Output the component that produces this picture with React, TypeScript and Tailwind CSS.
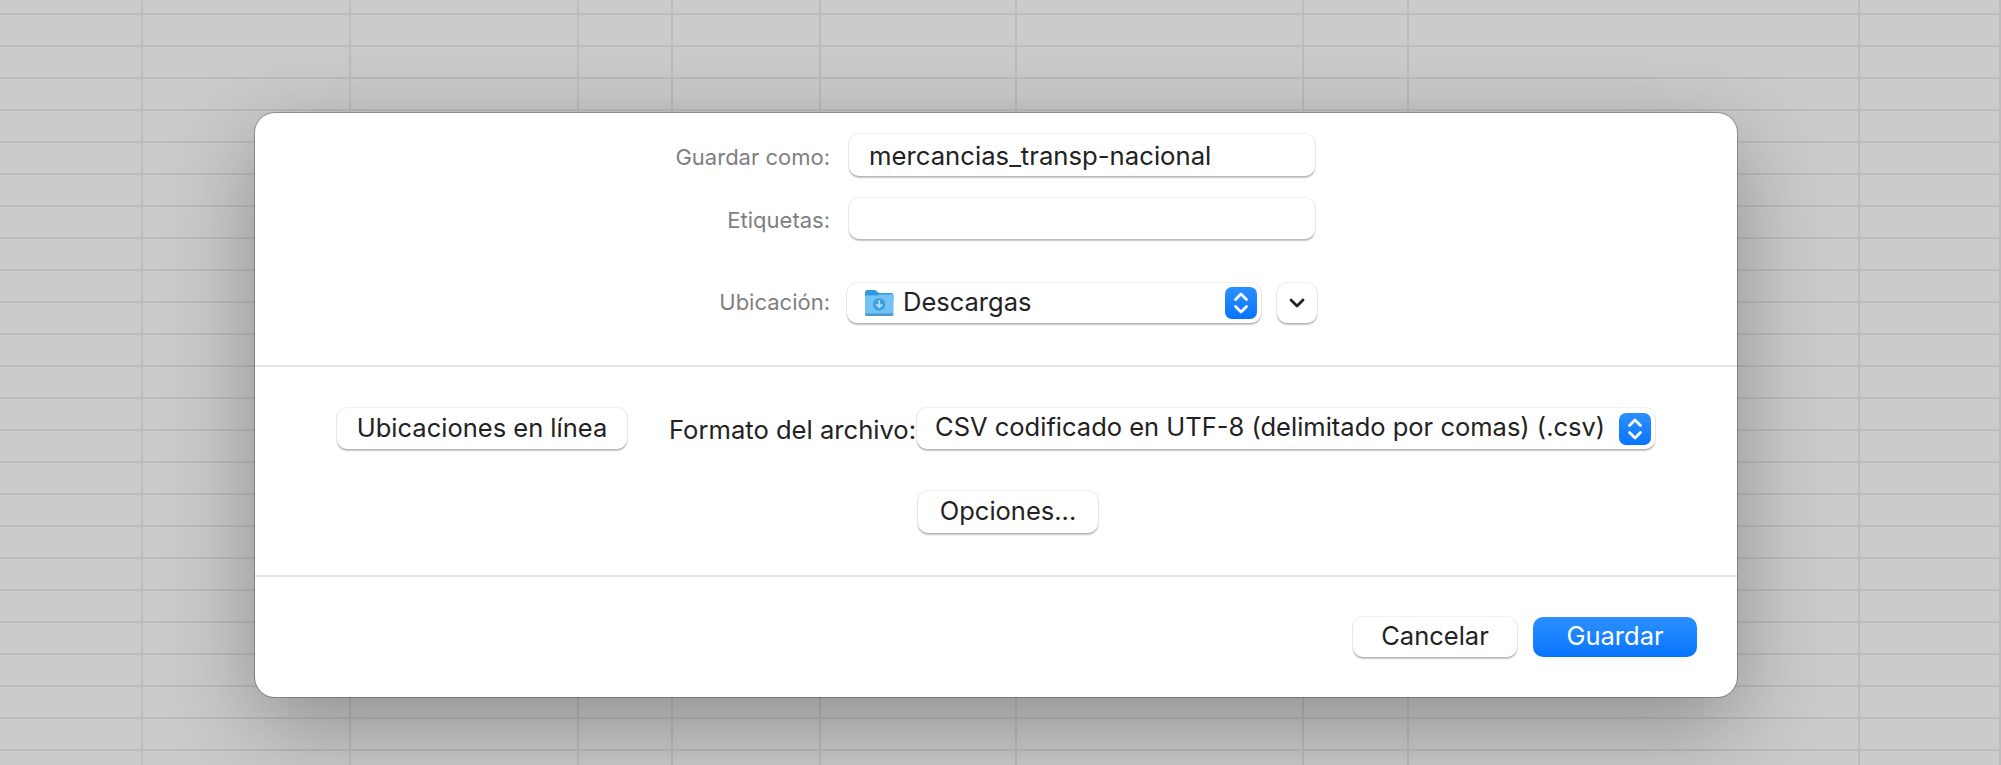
const COLS = 10;
const ROWS = 25;

function Stepper() {
  return (
    <span className="flex h-8 w-8 shrink-0 items-center justify-center rounded-[7px] bg-gradient-to-b from-[#2a90ff] to-[#0674ff]">
      <svg width="18" height="26" viewBox="0 0 18 26" fill="none" stroke="white" strokeWidth="2.8" strokeLinecap="round" strokeLinejoin="round">
        <path d="M3.5 9.5 L9 4 L14.5 9.5" />
        <path d="M3.5 16.5 L9 22 L14.5 16.5" />
      </svg>
    </span>
  );
}

function Folder() {
  return (
    <svg width="30" height="28" viewBox="0 0 30 28" className="shrink-0">
      <path d="M1 3.5 C1 1.8 2 1 3.5 1 H10 C11.5 1 12 1.6 13 2.6 C13.8 3.4 14.4 4 16 4 H27 C28.5 4 29.5 5 29.5 6.5 V12 H1 Z" fill="#2f9ade" />
      <path d="M1 6.5 H12 C14 6.5 14.5 5.6 16 5.6 H27.5 C28.8 5.6 29.5 6.4 29.5 7.6 V25 C29.5 26.3 28.8 27 27.5 27 H3 C1.7 27 1 26.3 1 25 Z" fill="#72c2f6" />
      <path d="M1 24.5 H29.5 V25 C29.5 26.3 28.8 27 27.5 27 H3 C1.7 27 1 26.3 1 25 Z" fill="#4f97c6" />
      <circle cx="15.2" cy="15.5" r="6.2" fill="#3c9fdf" />
      <path d="M15.2 11.8 V18 M12.6 15.6 L15.2 18.3 L17.8 15.6" fill="none" stroke="#a9dcfa" strokeWidth="1.7" strokeLinecap="round" strokeLinejoin="round" />
    </svg>
  );
}

const control =
  "rounded-[10px] bg-white shadow-[0_0_0_1px_rgba(0,0,0,0.05),0_1.5px_1.5px_rgba(0,0,0,0.24)]";
const label = "w-[575px] shrink-0 text-right text-[22px] leading-none text-[#808080]";

export default function App() {
  return (
    <div className="relative h-[765px] w-[2001px] overflow-hidden bg-[#cbcbcb] font-['Inter','Liberation_Sans',sans-serif] text-[#222222]">
      <div className="grid grid-cols-[143px_208px_228px_94px_148px_196px_287px_105px_451px_1fr] grid-rows-[15px_repeat(24,32px)]">
        {Array.from({ length: COLS * ROWS }, (_, i) => (
          <div key={i} className="border-r-2 border-b-2 border-[#bcbcbc]" />
        ))}
      </div>

      <div className="absolute left-[255px] top-[113px] flex h-[584px] w-[1482px] flex-col rounded-[20px] bg-white shadow-[0_0_0_1px_rgba(0,0,0,0.25),0_28px_90px_rgba(0,0,0,0.3)]">
        <div className="flex h-[254px] flex-col border-b-2 border-[#e5e5e5] pt-[21px]">
          <div className="flex items-center">
            <span className={`${label} pt-[3px]`}>Guardar como:</span>
            <div className={`ml-[19px] flex h-[42px] w-[466px] items-center pl-[20px] pt-[2px] text-[25.7px] ${control}`}>
              mercancias_transp-nacional
            </div>
          </div>
          <div className="mt-[22px] flex items-center">
            <span className={`${label} pt-[2px]`}>Etiquetas:</span>
            <div className={`ml-[19px] h-[41px] w-[466px] ${control}`} />
          </div>
          <div className="mt-[44px] flex items-center">
            <span className={`${label} pb-[2px]`}>Ubicación:</span>
            <div className={`ml-[17px] flex h-[40px] w-[414px] items-center pl-[17px] pr-[4px] text-[25.5px] ${control}`}>
              <Folder />
              <span className="ml-[9px] flex-1 pb-[2px]">Descargas</span>
              <Stepper />
            </div>
            <button className={`ml-[16px] flex h-[40px] w-[40px] items-center justify-center ${control}`}>
              <svg width="18" height="12" viewBox="0 0 18 12" fill="none" stroke="#222222" strokeWidth="2.8" strokeLinecap="round" strokeLinejoin="round">
                <path d="M3 3 L9 9 L15 3" />
              </svg>
            </button>
          </div>
        </div>

        <div className="flex h-[210px] flex-col border-b-2 border-[#e5e5e5] pt-[41px]">
          <div className="flex items-center pl-[82px]">
            <button className={`flex h-[41px] w-[290px] items-center justify-center text-[25.5px] ${control}`}>
              Ubicaciones en línea
            </button>
            <span className="ml-[42px] mt-[3px] w-[248px] whitespace-nowrap text-[25.6px] leading-none">Formato del archivo:</span>
            <div className={`flex h-[41px] w-[738px] items-center pl-[18px] pr-[4px] text-[25.5px] ${control}`}>
              <span className="flex-1 whitespace-nowrap pb-[2px]">CSV codificado en UTF-8 (delimitado por comas) (.csv)</span>
              <Stepper />
            </div>
          </div>
          <button className={`ml-[663px] mt-[42px] flex h-[42px] w-[180px] items-center justify-center pb-[2px] text-[25.5px] ${control}`}>
            Opciones...
          </button>
        </div>

        <div className="flex flex-1 items-start justify-end gap-4 pr-[40px] pt-[40px]">
          <button className={`flex h-[40px] w-[164px] items-center justify-center pb-[2px] text-[25.5px] ${control}`}>Cancelar</button>
          <button className="flex h-[40px] w-[164px] items-center justify-center rounded-[10px] bg-gradient-to-b from-[#2a90ff] to-[#0674ff] pb-[2px] text-[25.5px] text-white">
            Guardar
          </button>
        </div>
      </div>
    </div>
  );
}
